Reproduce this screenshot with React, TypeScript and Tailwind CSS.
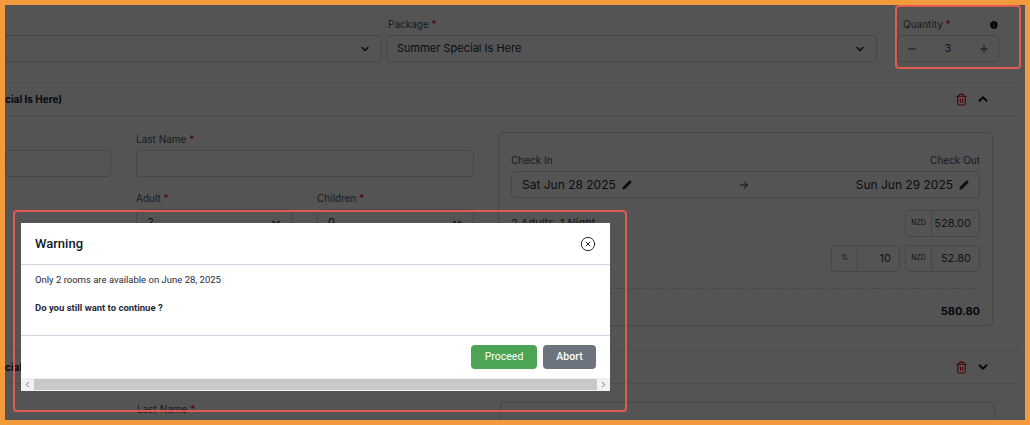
import { Trash2, ChevronDown, ChevronUp, Pencil, ArrowRight, Info, Minus, Plus, CircleX, ChevronLeft, ChevronRight } from "lucide-react";

const Req = () => <span className="text-red-600"> *</span>;

const Select = ({ w, value }: { w: string; value?: string }) => (
  <div className={`${w} h-[27px] border border-gray-300 rounded flex items-center justify-between px-2.5 text-[11px] text-gray-800`}>
    <span>{value}</span>
    <ChevronDown size={12} strokeWidth={3} />
  </div>
);

const Addon = ({ pre, val, w }: { pre: string; val: string; w: string }) => (
  <div className={`${w} h-[27px] border border-gray-300 rounded flex text-[11px]`}>
    <div className="w-[26px] border-r border-gray-300 flex items-center justify-center text-[7px]">{pre}</div>
    <div className="flex-1 flex items-center justify-end pr-2">{val}</div>
  </div>
);

const SectionHead = ({ title, open }: { title: string; open?: boolean }) => (
  <div className="h-[34px] border-y border-gray-200 flex items-center justify-between pr-[30px] text-[10px] font-bold text-gray-900">
    <span>{title}</span>
    <div className="flex items-center gap-2">
      <Trash2 size={13} className="text-red-600" />
      {open ? <ChevronUp size={14} strokeWidth={3.5} /> : <ChevronDown size={14} strokeWidth={3.5} />}
    </div>
  </div>
);

export default function App() {
  return (
    <div className="w-[1030px] h-[425px] border-[5px] border-[#f39a3c] overflow-hidden relative bg-white" style={{ fontFamily: "Inter, 'Noto Sans', sans-serif" }}>
      <div className="pl-0 text-gray-700">
        {/* top row */}
        <div className="flex items-end pt-[18px] h-[57px]">
          <Select w="w-[381px] -ml-[4px]" />
          <div className="ml-[4px] flex flex-col gap-[3px]">
            <span className="text-[10px] text-gray-600 pl-[2px]">Package<Req /></span>
            <Select w="w-[491px]" value="Summer Special Is Here" />
          </div>
          <div className="ml-[20px] w-[102px] flex flex-col gap-[3px]">
            <div className="flex justify-between items-center text-[10px] text-gray-600 pl-[6px]">
              <span>Quantity<Req /></span>
              <Info size={10} className="text-white fill-black" />
            </div>
            <div className="h-[27px] border border-gray-300 rounded flex items-center justify-between px-2 text-[11px]">
              <Minus size={12} />
              <span>3</span>
              <Plus size={12} />
            </div>
          </div>
        </div>
        <div className="mt-[20px] w-[1015px]">
          <SectionHead title="cial Is Here)" open />
        </div>
        <div className="flex mt-[16px]">
          <div className="w-[493px] flex flex-col">
            <div className="flex gap-[25px] items-end">
              <div className="w-[106px] h-[27px] border border-gray-300 rounded" />
              <div className="flex flex-col gap-[3px]">
                <span className="text-[10px] text-gray-600">Last Name<Req /></span>
                <div className="w-[338px] h-[27px] border border-gray-300 rounded" />
              </div>
            </div>
            <div className="flex gap-[24px] ml-[131px] mt-[14px]">
              <div className="flex flex-col gap-[3px]">
                <span className="text-[10px] text-gray-600">Adult<Req /></span>
                <Select w="w-[157px]" value="2" />
              </div>
              <div className="flex flex-col gap-[3px]">
                <span className="text-[10px] text-gray-600">Children<Req /></span>
                <Select w="w-[157px]" value="0" />
              </div>
            </div>
          </div>
          <div className="w-[495px] h-[194px] border border-gray-300 rounded px-[12px] pt-[20px] text-[10px]">
            <div className="flex justify-between text-gray-600"><span>Check In</span><span>Check Out</span></div>
            <div className="mt-[3px] h-[27px] border border-gray-300 rounded flex items-center justify-between px-2.5 text-[12px] text-gray-800">
              <span className="flex items-center gap-1.5">Sat Jun 28 2025 <Pencil size={10} fill="currentColor" /></span>
              <ArrowRight size={12} />
              <span className="flex items-center gap-1.5">Sun Jun 29 2025 <Pencil size={10} fill="currentColor" /></span>
            </div>
            <div className="mt-[12px] flex justify-between items-center">
              <span className="text-[11px]">2 Adults, 1 Night</span>
              <Addon pre="NZD" val="528.00" w="w-[75px]" />
            </div>
            <div className="mt-[8px] flex justify-end gap-[5px]">
              <Addon pre="%" val="10" w="w-[69px]" />
              <Addon pre="NZD" val="52.80" w="w-[75px]" />
            </div>
            <div className="mt-[16px] border-t border-dashed border-gray-300" />
            <div className="mt-[14px] text-right font-bold text-[11px] text-gray-900">580.80</div>
          </div>
        </div>
        <div className="mt-[24px] w-[1015px]">
          <SectionHead title="cial I" />
        </div>
        <div className="flex mt-[18px]">
          <span className="ml-[132px] text-[10px] text-gray-600">Last Name<Req /></span>
          <div className="ml-[305px] w-[495px] h-[30px] border border-gray-300 rounded" />
        </div>
      </div>

      {/* dim overlay */}
      <div className="absolute inset-0 bg-black/[0.67]" />

      {/* modal */}
      <div className="absolute left-[16px] top-[218px] w-[589px] bg-white" style={{ fontFamily: "Roboto, 'Liberation Sans', sans-serif" }}>
        <div className="h-[42px] flex items-center justify-between px-[14px] border-b border-gray-300">
          <span className="text-[13px] font-medium text-gray-900">Warning</span>
          <CircleX size={16} strokeWidth={1.5} className="text-gray-800" />
        </div>
        <div className="h-[71px] border-b border-gray-300 px-[14px] pt-[8px] text-[9.5px] text-gray-800">
          <p>Only 2 rooms are available on June 28, 2025</p>
          <p className="mt-[14px] font-bold">Do you still want to continue ?</p>
        </div>
        <div className="h-[42px] flex items-center justify-end gap-[6px] pr-[14px]">
          <button className="w-[66px] h-[24px] rounded-sm bg-[#4ca555] text-white text-[10.5px]">Proceed</button>
          <button className="w-[53px] h-[24px] rounded-sm bg-[#6c737c] text-white text-[10.5px] font-medium">Abort</button>
        </div>
        <div className="h-[13px] flex items-center bg-[#f1f1f1]">
          <ChevronLeft size={9} className="text-gray-600 mx-[2px]" />
          <div className="flex-1 h-[11px] bg-[#c8c8c8]" />
          <ChevronRight size={9} className="text-gray-600 mx-[2px]" />
        </div>
      </div>

      {/* annotation boxes */}
      <div className="absolute left-[8px] top-[205px] w-[614px] h-[202px] border-2 border-[#e05a4f] rounded-sm" />
      <div className="absolute left-[890px] top-[0px] w-[126px] h-[64px] border-2 border-[#e05a4f] rounded-sm" />
    </div>
  );
}
